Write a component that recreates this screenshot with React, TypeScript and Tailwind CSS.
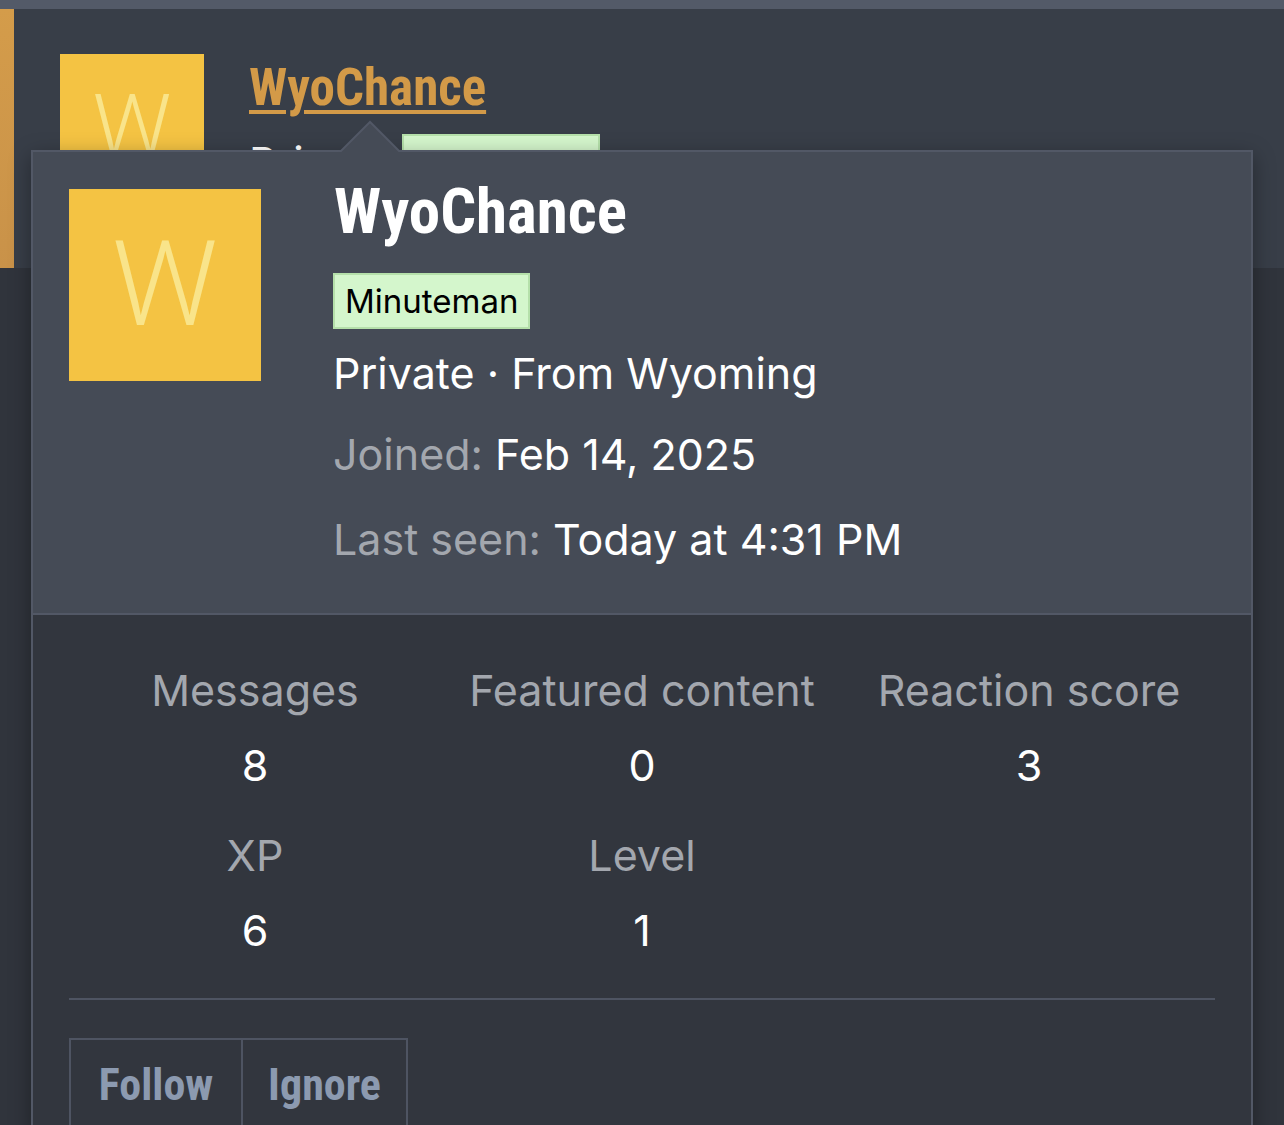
import React from 'react';

const cond = { fontFamily: '"Roboto Condensed", "Liberation Sans Narrow", sans-serif' };

interface Stat {
  label: string;
  value: string;
}

const stats: Stat[] = [
  { label: 'Messages', value: '8' },
  { label: 'Featured content', value: '0' },
  { label: 'Reaction score', value: '3' },
  { label: 'XP', value: '6' },
  { label: 'Level', value: '1' },
];

export default function App() {
  return (
    <div className="relative h-[1125px] w-full overflow-hidden bg-[#30343c] font-['Inter',sans-serif] text-white">
      <div className="h-[9px] bg-[#535a68]" />

      {/* post behind the tooltip */}
      <div className="flex h-[259px] bg-[#383e48]">
        <div className="w-[14px] bg-gradient-to-b from-[#d49c4a] to-[#c99249]" />
        <div className="flex gap-[45px] pl-[46px] pt-[45px]">
          <div className="flex h-[144px] w-[144px] items-center justify-center bg-[#f4c343] font-['Roboto',sans-serif] text-[88px] font-light text-[#f9e48a]">
            W
          </div>
          <div>
            <div
              className="mt-[6px] text-[51px] font-bold leading-[56px] text-[#d39a48] underline decoration-[4px] underline-offset-[5px]"
              style={cond}
            >
              WyoChance
            </div>
            <div className="mt-[18px] flex items-center gap-[11px] text-[43px] leading-[48px]">
              <span>Private</span>
              <span className="h-[56px] w-[198px] border-2 border-[#b5e0aa] bg-[#d4f6cc]" />
            </div>
          </div>
        </div>
      </div>

      {/* member tooltip */}
      <div className="absolute left-[31px] top-[150px] w-[1222px] border-2 border-[#525866] shadow-[0_6px_20px_rgba(0,0,0,0.35)]">
        <svg className="absolute left-[305px] top-[-32px]" width="64" height="34" viewBox="0 0 64 34">
          <polygon points="1,33 32,2 63,33" fill="#454b56" stroke="#525866" strokeWidth="2" />
          <rect x="0" y="32" width="64" height="2" fill="#454b56" />
        </svg>

        <div className="flex bg-[#454b56] px-[36px] pb-[48px] pt-[37px]">
          <div className="flex h-[192px] w-[192px] shrink-0 items-center justify-center bg-[#f4c343] font-['Roboto',sans-serif] text-[118px] font-light text-[#f9e48a]">
            W
          </div>
          <div className="ml-[72px] flex flex-col">
            <div className="ml-[1px] text-[63px] font-bold leading-[46px]" style={cond}>
              WyoChance
            </div>
            <div className="mt-[38px] self-start border-2 border-[#b5e0aa] bg-[#d4f6cc] px-[10px] text-[33px] leading-[52px] text-black">
              Minuteman
            </div>
            <div className="mt-[18px] text-[43px] leading-[52px]">Private · From Wyoming</div>
            <div className="mt-[29px] text-[43px] leading-[52px]">
              <span className="text-[#a3a7ae]">Joined: </span>Feb 14, 2025
            </div>
            <div className="mt-[33px] text-[43px] leading-[52px]">
              <span className="text-[#a3a7ae]">Last seen: </span>Today at 4:31 PM
            </div>
          </div>
        </div>

        <div className="border-t-2 border-[#525866] bg-[#32363e] px-[36px] pt-[51px]">
          <div className="grid grid-cols-[repeat(3,387px)] justify-center gap-y-[42px] text-center">
            {stats.map((s) => (
              <div key={s.label} className="flex flex-col items-center">
                <div className="text-[43px] leading-[48px] text-[#a3a7ae]">{s.label}</div>
                <div className="mt-[27px] text-[43px] leading-[48px]">{s.value}</div>
              </div>
            ))}
          </div>
          <div className="mt-[44px] h-[2px] bg-[#4e5462]" />
          <div className="mt-[38px] flex w-[339px] border-2 border-[#4e5462]">
            <div className="flex h-[90px] w-[172px] items-center justify-center border-r-2 border-[#4e5462] text-[44px] font-bold text-[#8c9ab0]" style={cond}>
              Follow
            </div>
            <div className="flex h-[90px] flex-1 items-center justify-center text-[44px] font-bold text-[#8c9ab0]" style={cond}>
              Ignore
            </div>
          </div>
        </div>
      </div>
    </div>
  );
}
